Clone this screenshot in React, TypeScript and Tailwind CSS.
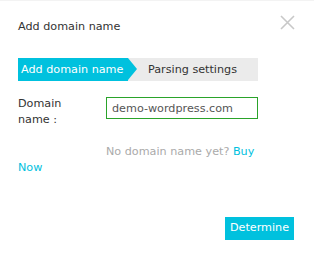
export default function App() {
  return (
    <div
      className="h-[263px] w-[314px] border-t border-[#f3f3f3] bg-white text-[11.2px] text-[#333]"
      style={{ fontFamily: '"DejaVu Sans", sans-serif' }}
    >
      <div className="flex items-start justify-between pl-[18px] pr-[19px] pt-[17px]">
        <h1 className="leading-[18px]">Add domain name</h1>
        <svg width="15" height="15" viewBox="0 0 15 15" className="mt-[-3px]">
          <path d="M1 1L14 14M14 1L1 14" stroke="#c8c8c8" strokeWidth="1.6" />
        </svg>
      </div>

      <div className="ml-[18px] mt-[22px] flex h-[23px] w-[240px] bg-[#ebebeb] leading-[23px]">
        <div className="relative w-[110px] whitespace-nowrap bg-[#00c1de] pl-[3px] text-white">
          Add domain name
          <span className="absolute left-full top-0 h-0 w-0 border-y-[11.5px] border-l-[9px] border-y-transparent border-l-[#00c1de]" />
        </div>
        <div className="whitespace-nowrap pl-[20px]">Parsing settings</div>
      </div>

      <div className="mt-[16px] flex items-start px-[18px]">
        <label className="mt-[-1px] w-[88px] leading-[16px]">
          Domain
          <br />
          name :
        </label>
        <input
          defaultValue="demo-wordpress.com"
          className="h-[22px] w-[152px] border border-[#2aa32a] px-[5px] text-[11.2px] text-[#555] outline-none"
          style={{ fontFamily: '"DejaVu Sans", sans-serif' }}
        />
      </div>

      <p className="ml-[18px] mt-[16px] w-[240px] leading-[16px] text-[#aaa]">
        <span className="inline-block w-[88px]" />
        No domain name yet? <a className="text-[#00c1de]">Buy Now</a>
      </p>

      <div className="mt-[41px] flex justify-end pr-[20px]">
        <button className="h-[23px] w-[69px] bg-[#00c1de] text-white">Determine</button>
      </div>
    </div>
  );
}
